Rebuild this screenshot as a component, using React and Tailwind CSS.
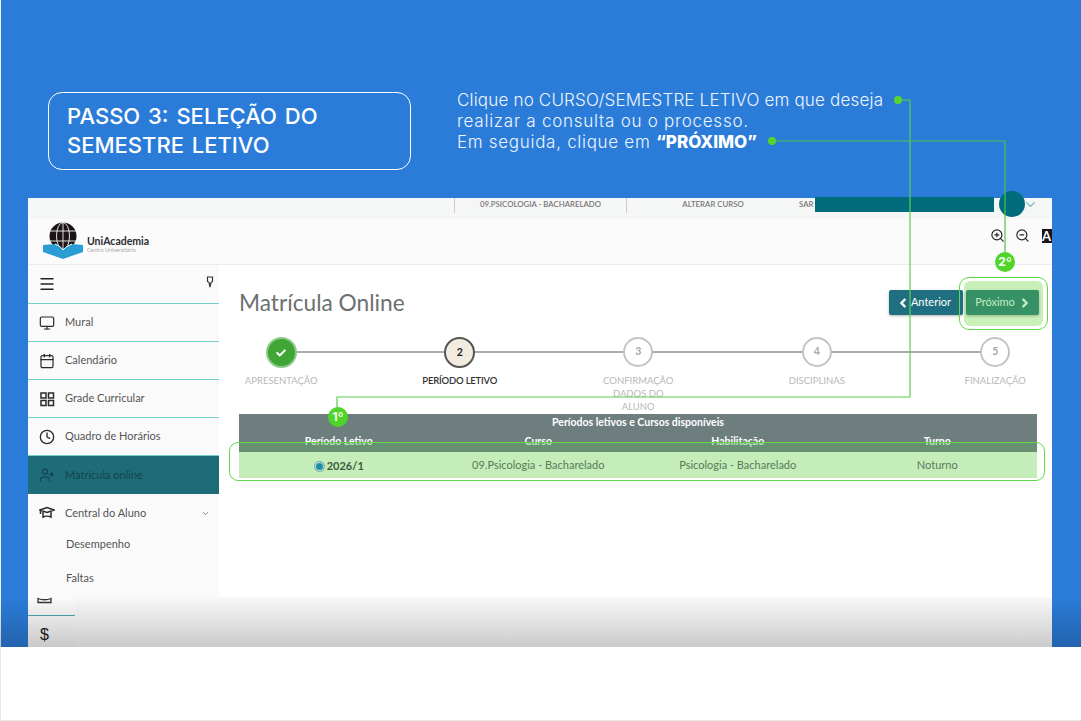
import React from "react";
import { Monitor, Calendar, Clock, UserPlus, ChevronDown, ZoomIn, ZoomOut, Menu } from "lucide-react";
import { FaCheck, FaChevronLeft, FaChevronRight } from "react-icons/fa";

function GridIcon() {
  return (
    <svg width="16" height="16" viewBox="0 0 16 16" fill="none" stroke="#2a2a2a" strokeWidth="1.5">
      <rect x="2" y="2" width="5" height="5" />
      <rect x="9.5" y="2" width="5" height="5" />
      <rect x="2" y="9.5" width="5" height="5" />
      <rect x="9.5" y="9.5" width="5" height="5" />
    </svg>
  );
}

function CapIcon() {
  return (
    <svg width="16" height="16" viewBox="0 0 16 16" fill="none" stroke="#2a2a2a" strokeWidth="1.5">
      <path d="M1 5L8 2.5L15 5L8 7.5Z" />
      <path d="M4 6.5V12C6 11 10 11 12 12V6.5" />
      <path d="M1.5 5V9" />
    </svg>
  );
}

const NAV = [
  { icon: <Monitor size={16} strokeWidth={1.8} className="text-[#2a2a2a]" />, label: "Mural" },
  { icon: <Calendar size={16} strokeWidth={1.8} className="text-[#2a2a2a]" />, label: "Calendário" },
  { icon: <GridIcon />, label: "Grade Curricular" },
  { icon: <Clock size={16} strokeWidth={2} className="text-[#2a2a2a]" />, label: "Quadro de Horários" },
];

const STEPS = [
  { n: "3", label: ["CONFIRMAÇÃO", "DADOS DO", "ALUNO"] },
  { n: "4", label: ["DISCIPLINAS"] },
  { n: "5", label: ["FINALIZAÇÃO"] },
];

function Logo() {
  return (
    <div className="flex items-center pl-[14px] gap-[1px] mb-[2px]">
      <svg width="44" height="40" viewBox="0 0 44 40">
        <circle cx="21" cy="15" r="13.5" fill="#1c1414" />
        <g stroke="#f4f4f4" strokeWidth="0.9" fill="none">
          <ellipse cx="21" cy="15" rx="6.5" ry="13.5" />
          <path d="M21 1.5V28.5M8 10H34M8 20H34" />
        </g>
        <path d="M1 24 L13 23 Q19 25 21 29 Q24 25 30 23 L41 24 V31 L21 38 L1 31 Z" fill="#2a9ed4" />
        <path d="M13 23 Q19 25 21 29 Q24 25 30 23" fill="none" stroke="#fafafa" strokeWidth="1" />
      </svg>
      <div className="flex flex-col mt-[7px]">
        <span className="text-[10.5px] leading-[12px] font-bold text-[#2b2b33]">UniAcademia</span>
        <span className="text-[5.5px] leading-[7px] text-[#aaa]">Centro Universitário</span>
      </div>
    </div>
  );
}

function Sidebar() {
  return (
    <aside className="w-[191px] shrink-0 bg-[#fafafa] flex flex-col text-[11px] text-[#555]">
      <div className="h-[39px] flex items-center justify-between pl-[10px] pr-[5px] shrink-0 border-b border-[#74cfcd]">
        <Menu size={18} strokeWidth={1.8} className="text-[#222]" />
        <svg width="8" height="12" viewBox="0 0 8 12" className="mb-[4px]">
          <path d="M1.5 1H6.5V5.5L5 6.5L4 11L3 6.5L1.5 5.5Z" fill="none" stroke="#333" strokeWidth="1.2" />
        </svg>
      </div>
      {NAV.map(({ icon, label }) => (
        <div key={label} className="h-[38px] flex items-center gap-[10px] pl-[11px] shrink-0 border-b border-[#74cfcd]">
          {icon}
          <span>{label}</span>
        </div>
      ))}
      <div className="h-[38px] flex items-center gap-[10px] pl-[11px] shrink-0 bg-[#1f6c79] text-[#15424d]">
        <UserPlus size={16} strokeWidth={1.5} className="text-[#0f3a44]" />
        <span>Matrícula online</span>
      </div>
      <div className="h-[38px] flex items-center gap-[10px] pl-[11px] pr-[9px] shrink-0">
        <CapIcon />
        <span className="flex-1">Central do Aluno</span>
        <ChevronDown size={9} strokeWidth={1.8} />
      </div>
      <div className="h-[25px] flex items-center pl-[38px] shrink-0">Desempenho</div>
      <div className="h-[42px] flex items-center pl-[38px] shrink-0">Faltas</div>
      <div className="w-[47px] h-[17px] shrink-0 border-b border-[#4fa9b1] pl-[9px] flex items-start">
        <svg width="15" height="7" viewBox="0 0 15 7" className="-mt-[2px]">
          <path d="M1 1.5 Q7.5 4 14 1.5 V5.5 H1 Z" fill="none" stroke="#333" strokeWidth="1.3" />
        </svg>
      </div>
      <div className="w-[47px] flex-1 pl-[12px] pt-[9px] text-[16px] leading-[20px] text-[#222] font-['Liberation_Sans']">$</div>
    </aside>
  );
}

function Stepper() {
  return (
    <div className="relative ml-[-47px] w-[892.5px] grid grid-cols-5 mt-[9px] h-[77px] overflow-hidden">
      <div className="absolute left-[89px] right-[89px] top-[14px] h-[2px] bg-[#a9adad]" />
      <div className="relative flex flex-col items-center">
        <div className="w-[31px] h-[31px] rounded-full bg-[#3fa535] border-2 border-[#8ec98a] flex items-center justify-center">
          <FaCheck size={10} className="text-white" />
        </div>
        <span className="mt-[6px] text-[9.5px] leading-[13px] text-[#b8b8b8]">APRESENTAÇÃO</span>
      </div>
      <div className="relative flex flex-col items-center">
        <div className="w-[31px] h-[31px] rounded-full bg-[#f3ebe0] border-[2.5px] border-[#555] flex items-center justify-center text-[10.5px] font-bold text-[#222]">2</div>
        <span className="mt-[6px] text-[9.5px] leading-[13px] font-semibold tracking-[-0.2px] text-[#333]">PERÍODO LETIVO</span>
      </div>
      {STEPS.map((s) => (
        <div key={s.n} className="relative flex flex-col items-center">
          <div className="w-[30px] h-[30px] rounded-full bg-white border-2 border-[#c4c4c4] flex items-center justify-center text-[10.5px] font-bold text-[#a8a8a8]">{s.n}</div>
          <div className="mt-[7px] flex flex-col items-center text-[9.5px] leading-[13px] text-[#b8b8b8]">
            {s.label.map((l) => <span key={l}>{l}</span>)}
          </div>
        </div>
      ))}
    </div>
  );
}

function Table() {
  const cols = ["Período Letivo", "Curso", "Habilitação", "Turno"];
  return (
    <div className="w-[798px] relative text-[10.5px]">
      <div className="h-[38px] bg-[#6e7e7f] text-white font-bold flex flex-col">
        <div className="h-[17px] leading-[17px] text-center">Períodos letivos e Cursos disponíveis</div>
        <div className="grid grid-cols-4 text-center leading-[20px]">
          {cols.map((c) => <div key={c}>{c}</div>)}
        </div>
      </div>
      <div className="h-[26px] bg-[#c4edb9] grid grid-cols-4 items-center text-center text-[11px] text-[#5a7a5a]">
        <div className="flex items-center justify-center gap-[2px] text-[11px] font-bold text-[#3d5a3d] pt-[2px]">
          <span className="w-[11px] h-[11px] rounded-full border border-[#7fb5b0] bg-[#1f8f9e] ring-1 ring-inset ring-white/80" />
          2026/1
        </div>
        <div>09.Psicologia - Bacharelado</div>
        <div>Psicologia - Bacharelado</div>
        <div>Noturno</div>
      </div>
      <div className="absolute left-0 right-0 top-[28px] h-[10px] bg-[#5cab5c]/40" />
    </div>
  );
}

function Main() {
  return (
    <main className="flex-1 bg-white pl-[20px] flex flex-col min-w-0">
      <div className="flex items-center justify-between pr-[13px] pt-[12px] h-[63px] shrink-0">
        <h1 className="text-[22.7px] leading-[28px] text-[#6b7070]">Matrícula Online</h1>
        <div className="flex text-[11px] text-white">
          <button className="h-[25px] w-[74px] pr-[3px] rounded-[2px] bg-[#206f80] shadow-[0_1px_3px_rgba(0,0,0,0.3)] flex items-center justify-center gap-[3px]">
            <FaChevronLeft size={10} stroke="currentColor" strokeWidth={50} />Anterior
          </button>
          <div className="relative isolate ml-[3px]">
            <div className="absolute left-[-2px] right-[-4px] top-[-9px] bottom-[-11px] rounded-[6px] bg-[#c8f0b8] -z-10" />
            <button className="h-[25px] w-[73px] rounded-[2px] bg-[#369167] text-[#c5ecc1] shadow-[0_1px_3px_rgba(0,0,0,0.25)] flex items-center justify-center gap-[5px]">
              Próximo<FaChevronRight size={10} stroke="currentColor" strokeWidth={50} />
            </button>
          </div>
        </div>
      </div>
      <Stepper />
      <Table />
    </main>
  );
}

function AppShot() {
  return (
    <div className="relative ml-[28px] mt-[27px] w-[1024px] h-[449px] flex flex-col overflow-hidden bg-white font-[Lato,sans-serif]">
      <div className="h-[21px] shrink-0 bg-[#f5f6f6] relative flex text-[7.8px] font-semibold text-[#777] leading-[13px]">
        <div className="ml-[426px] w-[173px] h-[15px] border-x border-[#ccc] text-center">09.PSICOLOGIA - BACHARELADO</div>
        <div className="w-[172px] text-center">ALTERAR CURSO</div>
        <div>SAR</div>
      </div>
      <div className="h-[46px] shrink-0 bg-[#fbfbfb] border-b border-[#ececec] flex items-center justify-between">
        <Logo />
        <div className="flex items-center text-[#222] mb-[12px]">
          <ZoomIn size={15} strokeWidth={1.9} />
          <ZoomOut size={15} strokeWidth={1.9} className="ml-[10px]" />
          <span className="ml-[12px] w-[10px] h-[14px] bg-[#1c1414] text-white text-[13px] leading-[14px] font-bold overflow-hidden">A</span>
        </div>
      </div>
      <div className="flex-1 flex min-h-0">
        <Sidebar />
        <Main />
      </div>
    </div>
  );
}

function Overlays() {
  return (
    <>
      {/* faded bottom of the captured page */}
      <div className="absolute left-0 right-0 top-[597px] h-[50px] bg-gradient-to-b from-black/0 to-black/20 pointer-events-none" />
      <div className="absolute left-[75px] w-[977px] top-[597px] h-[50px] bg-gradient-to-b from-[#f8f8f8] to-[#cbcbcb]" />

      {/* redaction over the captured user name */}
      <div className="absolute left-[815px] top-[197px] w-[179px] h-[15px] bg-[#016d7c]" />
      <ChevronDown size={15} strokeWidth={2} className="absolute left-[1023px] top-[197px] text-[#79b4bd]" />
      <div className="absolute left-[999px] top-[191px] w-[26px] h-[26px] rounded-full bg-[#016d7c]" />

      {/* highlights */}
      <div className="absolute left-[959px] top-[277px] w-[89px] h-[53px] rounded-[10px] border border-[#5fd84a]" />
      <div className="absolute left-[229px] top-[442px] w-[816px] h-[39px] rounded-[9px] border border-[#5fd84a]" />

      <svg className="absolute left-0 top-0 pointer-events-none" width="1081" height="721" fill="none">
        <path d="M898 100H910V397H337V410" stroke="#5ccf50" strokeWidth="1.2" />
        <path d="M772 141H1005V256" stroke="#4fc24f" strokeWidth="1.2" />
        <circle cx="898" cy="100" r="4" fill="#57d42e" />
        <circle cx="772" cy="141" r="4" fill="#57d42e" />
      </svg>

      <div className="absolute left-[995px] top-[252px] w-[20px] h-[20px] rounded-full bg-[#4fd42a] text-white text-[12px] leading-[20px] font-bold text-center font-[Inter,sans-serif]">2º</div>
      <div className="absolute left-[328px] top-[407px] w-[20px] h-[20px] rounded-full bg-[#4fd42a] text-white text-[12px] leading-[20px] font-bold text-center font-[Inter,sans-serif]">1º</div>
    </>
  );
}

export default function App() {
  return (
    <div className="relative w-[1081px] h-[721px] overflow-hidden bg-white shadow-[inset_1px_-1px_0_#e8e8e8]">
      <div className="h-[647px] bg-[#2b7cd9] pt-[92px] flex flex-col shadow-[inset_1px_0_0_#eef2f7]">
        <div className="flex items-start pl-[48px] h-[79px]">
          <div className="w-[363px] h-[78px] rounded-[14px] border border-white text-white pl-[18px] pt-[9px] text-[22px] leading-[29px] font-medium [word-spacing:2px] font-[Inter,sans-serif]">
            PASSO 3: SELEÇÃO DO<br />SEMESTRE LETIVO
          </div>
          <div className="ml-[46px] mt-[-2px] text-[17px] leading-[21px] font-light text-[#eef5fd] font-[Inter,sans-serif]">
            <div className="tracking-[0.18px]">Clique no CURSO/SEMESTRE LETIVO em que deseja</div>
            <div className="tracking-[0.75px]">realizar a consulta ou o processo.</div>
            <div className="tracking-[0.7px]">Em seguida, clique em <b className="font-extrabold text-white tracking-normal">“PRÓXIMO”</b></div>
          </div>
        </div>
        <AppShot />
      </div>
      <Overlays />
    </div>
  );
}
